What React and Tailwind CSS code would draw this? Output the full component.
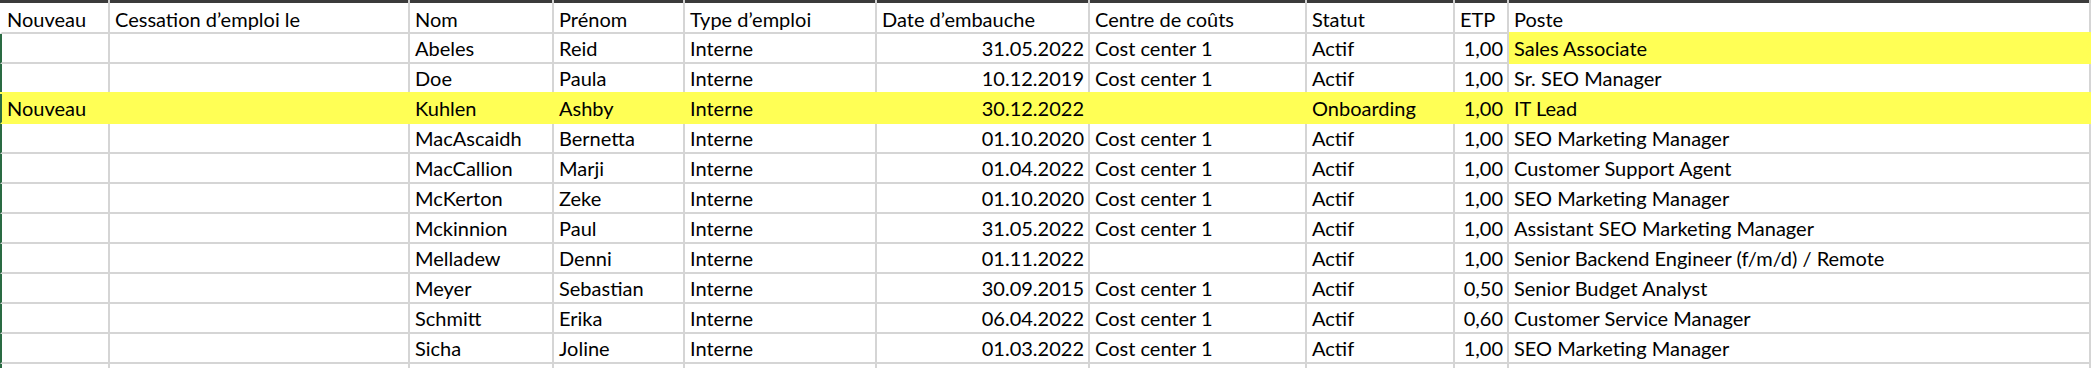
import React from 'react';

const cols = [
  { key: 'nouveau', label: 'Nouveau' },
  { key: 'cess', label: 'Cessation d’emploi le' },
  { key: 'nom', label: 'Nom' },
  { key: 'prenom', label: 'Prénom' },
  { key: 'type', label: 'Type d’emploi' },
  { key: 'date', label: 'Date d’embauche', right: true },
  { key: 'cc', label: 'Centre de coûts' },
  { key: 'statut', label: 'Statut' },
  { key: 'etp', label: 'ETP', right: true },
  { key: 'poste', label: 'Poste' },
];

const CC = 'Cost center 1';

const rows = [
  { nom: 'Abeles', prenom: 'Reid', date: '31.05.2022', cc: CC, statut: 'Actif', etp: '1,00', poste: 'Sales Associate', mark: 'poste' },
  { nom: 'Doe', prenom: 'Paula', date: '10.12.2019', cc: CC, statut: 'Actif', etp: '1,00', poste: 'Sr. SEO Manager' },
  { nouveau: 'Nouveau', nom: 'Kuhlen', prenom: 'Ashby', date: '30.12.2022', cc: '', statut: 'Onboarding', etp: '1,00', poste: 'IT Lead', mark: 'row' },
  { nom: 'MacAscaidh', prenom: 'Bernetta', date: '01.10.2020', cc: CC, statut: 'Actif', etp: '1,00', poste: 'SEO Marketing Manager' },
  { nom: 'MacCallion', prenom: 'Marji', date: '01.04.2022', cc: CC, statut: 'Actif', etp: '1,00', poste: 'Customer Support Agent' },
  { nom: 'McKerton', prenom: 'Zeke', date: '01.10.2020', cc: CC, statut: 'Actif', etp: '1,00', poste: 'SEO Marketing Manager' },
  { nom: 'Mckinnion', prenom: 'Paul', date: '31.05.2022', cc: CC, statut: 'Actif', etp: '1,00', poste: 'Assistant SEO Marketing Manager' },
  { nom: 'Melladew', prenom: 'Denni', date: '01.11.2022', cc: '', statut: 'Actif', etp: '1,00', poste: 'Senior Backend Engineer (f/m/d) / Remote' },
  { nom: 'Meyer', prenom: 'Sebastian', date: '30.09.2015', cc: CC, statut: 'Actif', etp: '0,50', poste: 'Senior Budget Analyst' },
  { nom: 'Schmitt', prenom: 'Erika', date: '06.04.2022', cc: CC, statut: 'Actif', etp: '0,60', poste: 'Customer Service Manager' },
  { nom: 'Sicha', prenom: 'Joline', date: '01.03.2022', cc: CC, statut: 'Actif', etp: '1,00', poste: 'SEO Marketing Manager' },
];

const grid = 'grid grid-cols-[110px_300px_144px_131px_192px_213px_217px_148px_54px_582px]';

function Cell({ children, right, first, yellow, header }) {
  const base = 'flex items-end whitespace-nowrap overflow-hidden border-r-2 border-b-2';
  const height = header ? 'h-[31px] pb-[3px]' : 'h-[30px] pb-[4px]';
  const align = right ? 'justify-end pr-[4px]' : 'pl-[5px]';
  const colour = yellow
    ? 'bg-[#ffff55] border-[#ffff55] shadow-[0_-2px_0_#ffff55]'
    : 'bg-white border-[#d5d5d5]';
  const edge = first ? (header ? 'border-l-2 border-l-white' : 'border-l-2 border-l-[#2a6b43]') : '';
  return <div className={`${base} ${height} ${align} ${colour} ${edge}`}>{children}</div>;
}

export default function App() {
  return (
    <div
      className="w-[2092px] h-[368px] overflow-hidden bg-white text-black text-[20px] leading-[20px]"
      style={{ fontFamily: 'Lato, "Open Sans", sans-serif' }}
    >
      {/* bande sombre en haut */}
      <div className={grid}>
        {cols.map((c) => (
          <div key={c.key} className="h-[3px] bg-[#3b3b3b] border-r-2 border-[#cfcfcf]" />
        ))}
      </div>

      {/* en-têtes */}
      <div className={grid}>
        {cols.map((c, i) => (
          <Cell key={c.key} header first={i === 0}>
            {c.label}
          </Cell>
        ))}
      </div>

      {rows.map((r, ri) => (
        <div key={ri} className={grid}>
          {cols.map((c, i) => {
            const value = c.key === 'type' ? 'Interne' : r[c.key] || '';
            const yellow = r.mark === 'row' || (r.mark === 'poste' && c.key === 'poste');
            return (
              <Cell key={c.key} right={c.right} first={i === 0} yellow={yellow}>
                {value}
              </Cell>
            );
          })}
        </div>
      ))}

      {/* ligne suivante, coupée */}
      <div className={grid}>
        {cols.map((c, i) => (
          <Cell key={c.key} first={i === 0} />
        ))}
      </div>
    </div>
  );
}
